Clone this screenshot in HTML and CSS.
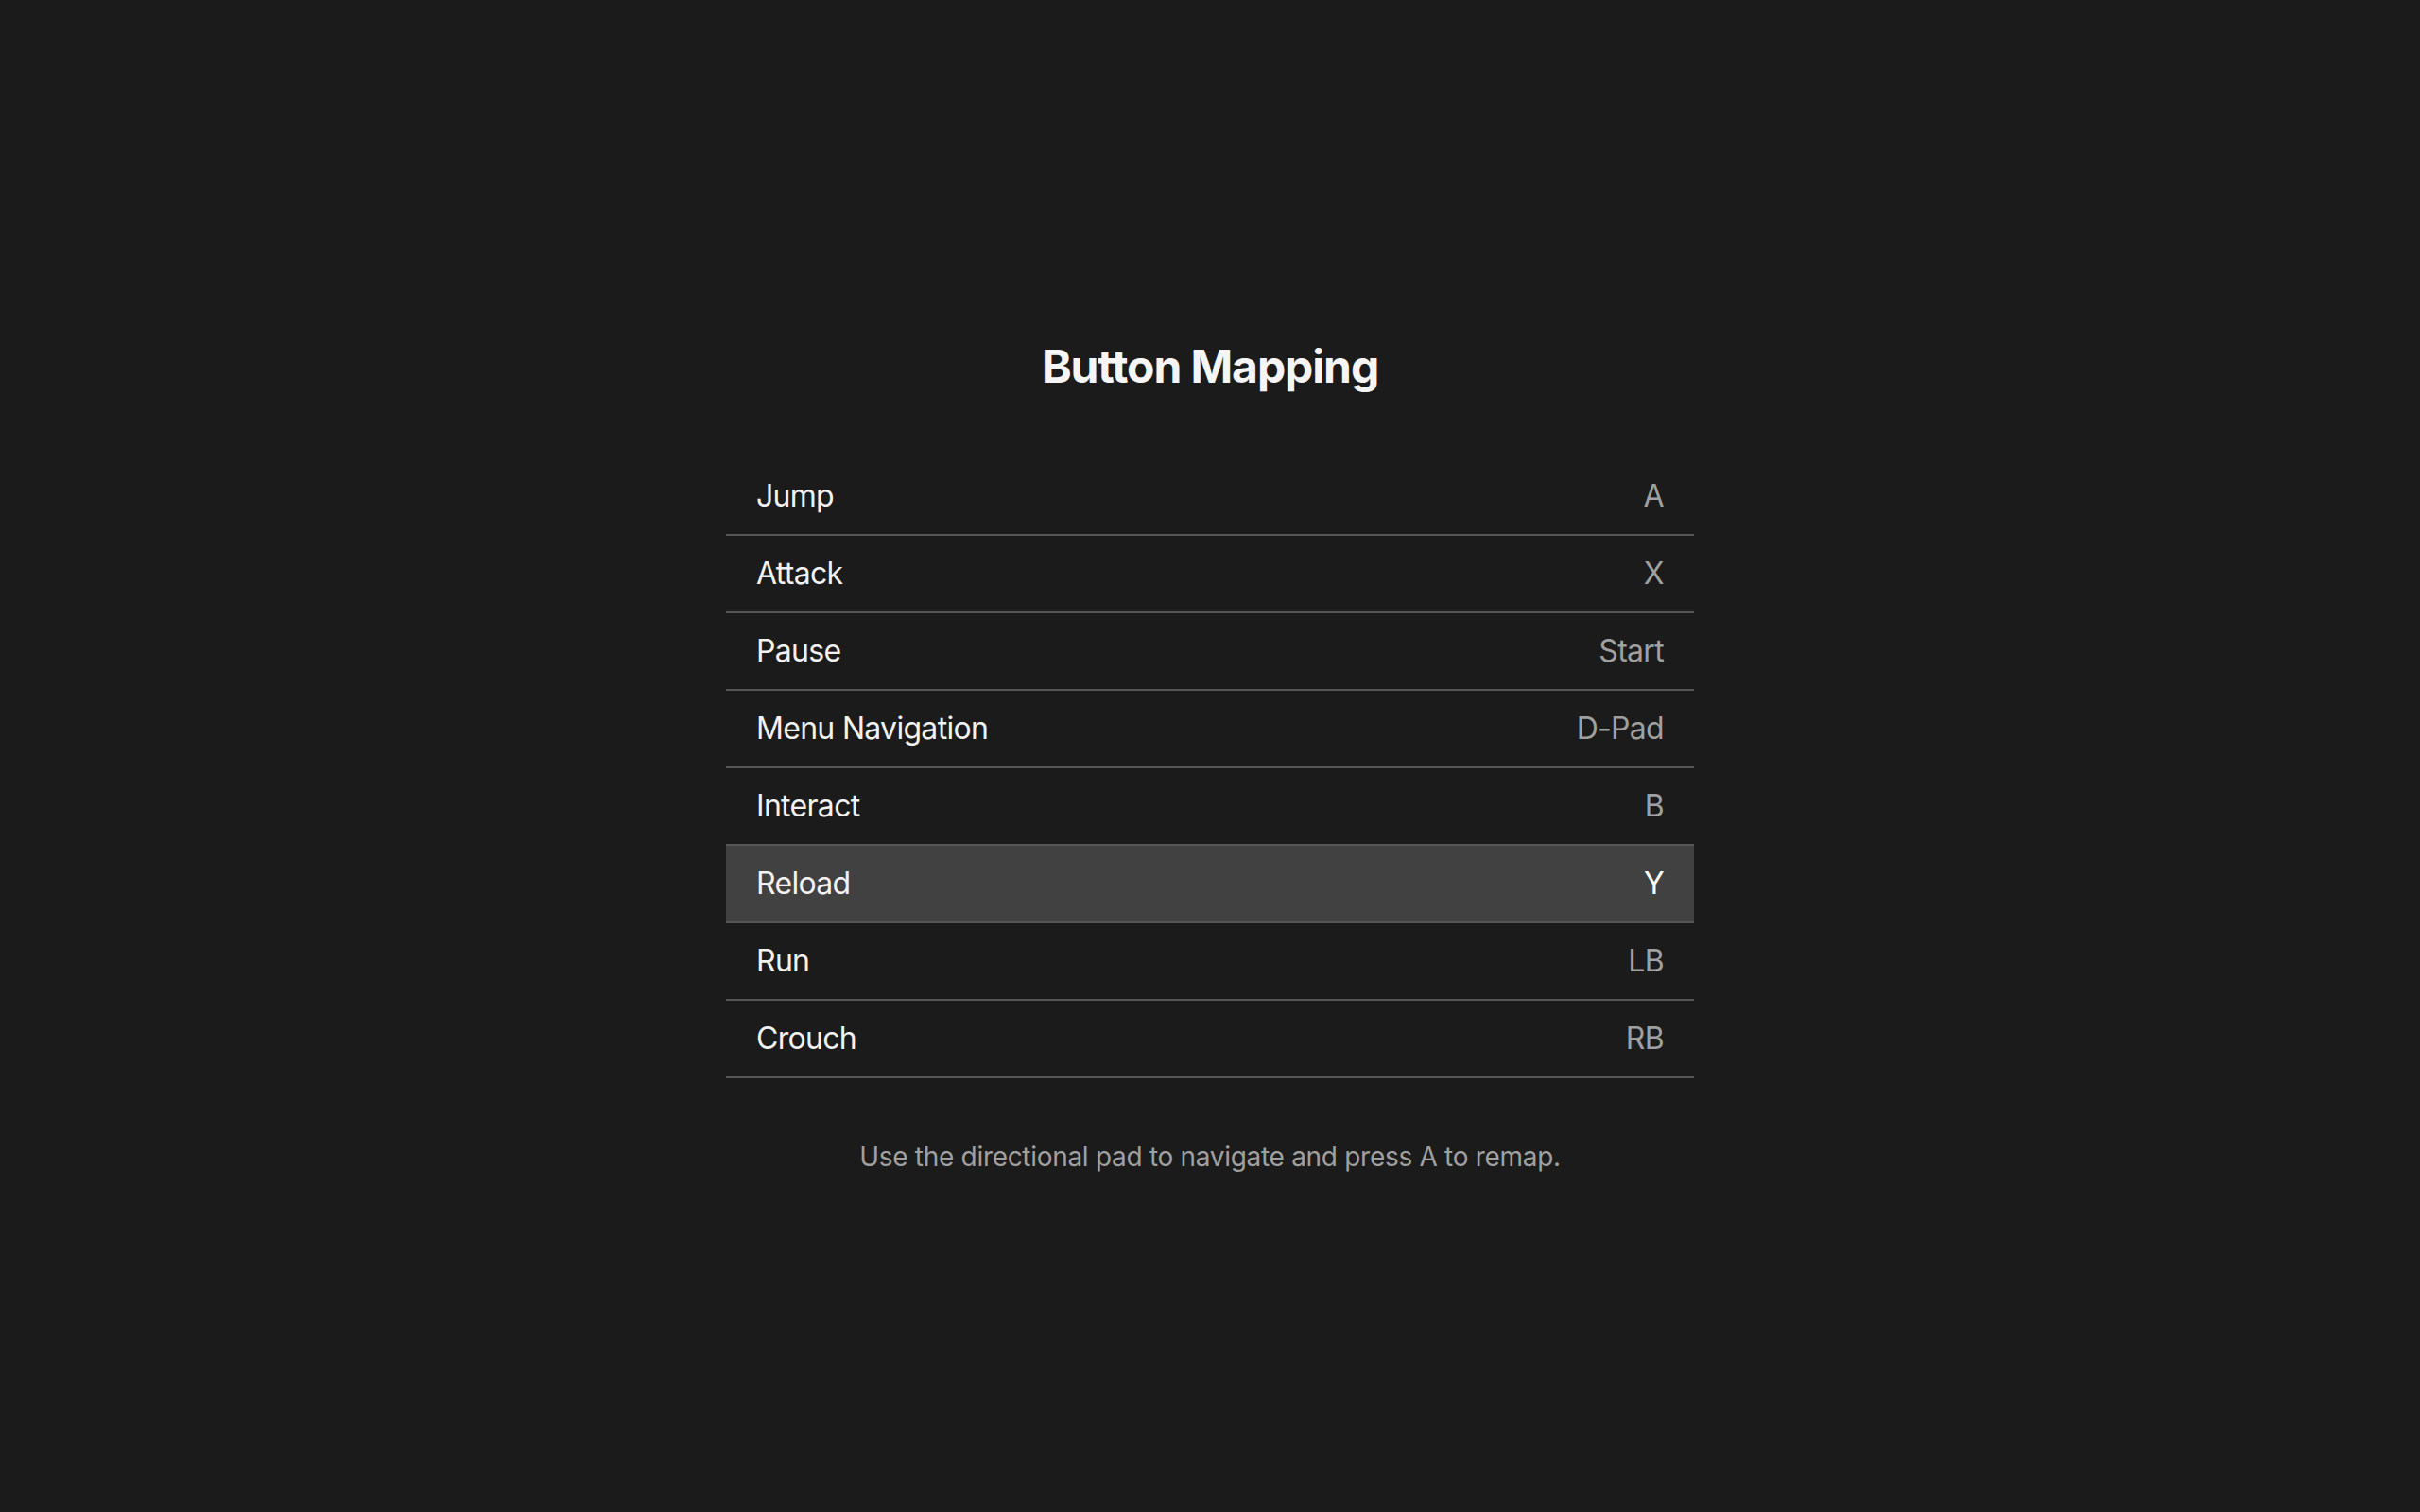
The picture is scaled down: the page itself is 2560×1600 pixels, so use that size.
FILE: index.html
```html
<!DOCTYPE html>
<html lang="en">
<head>
<meta charset="utf-8">
<title>Button Mapping</title>
<link rel="stylesheet" href="styles.css">
</head>
<body>
<main class="screen">
  <section class="panel">
    <h1 class="title">Button Mapping</h1>
    <ul class="mapping">
      <li class="row"><span class="action">Jump</span><span class="key">A</span></li>
      <li class="row"><span class="action">Attack</span><span class="key">X</span></li>
      <li class="row"><span class="action">Pause</span><span class="key">Start</span></li>
      <li class="row"><span class="action">Menu Navigation</span><span class="key">D-Pad</span></li>
      <li class="row"><span class="action">Interact</span><span class="key">B</span></li>
      <li class="row selected"><span class="action">Reload</span><span class="key">Y</span></li>
      <li class="row"><span class="action">Run</span><span class="key">LB</span></li>
      <li class="row"><span class="action">Crouch</span><span class="key">RB</span></li>
    </ul>
    <p class="hint">Use the directional pad to navigate and press A to remap.</p>
  </section>
</main>
</body>
</html>
```

FILE: styles.css
```css
* { box-sizing: border-box; }

html, body {
  margin: 0;
  padding: 0;
  height: 100%;
  background: #1b1b1b;
}

body {
  font-family: Inter, "Noto Sans", "Liberation Sans", sans-serif;
  color: #f2f2f2;
}

.screen {
  min-height: 100vh;
  display: flex;
  align-items: center;
  justify-content: center;
}

.panel {
  width: 1024px;
  display: flex;
  flex-direction: column;
  align-items: stretch;
}

.title {
  margin: 0 0 68px;
  text-align: center;
  font-size: 48px;
  line-height: 58px;
  font-weight: 700;
  letter-spacing: -1.1px;
  color: #f5f5f5;
}

.mapping {
  list-style: none;
  margin: 0;
  padding: 0;
}

.row {
  display: flex;
  justify-content: space-between;
  align-items: center;
  padding: 24px 32px;
  border-bottom: 2px solid #565656;
  font-size: 32px;
  line-height: 32px;
  letter-spacing: -0.7px;
}

.action {
  color: #f2f2f2;
}

.key {
  color: #a0a0a0;
}

.row.selected {
  background: #414141;
}

.row.selected .key {
  color: #ffffff;
}

.hint {
  margin: 66px 0 0;
  text-align: center;
  font-size: 28px;
  line-height: 34px;
  letter-spacing: -0.3px;
  color: #a0a0a0;
}
```
